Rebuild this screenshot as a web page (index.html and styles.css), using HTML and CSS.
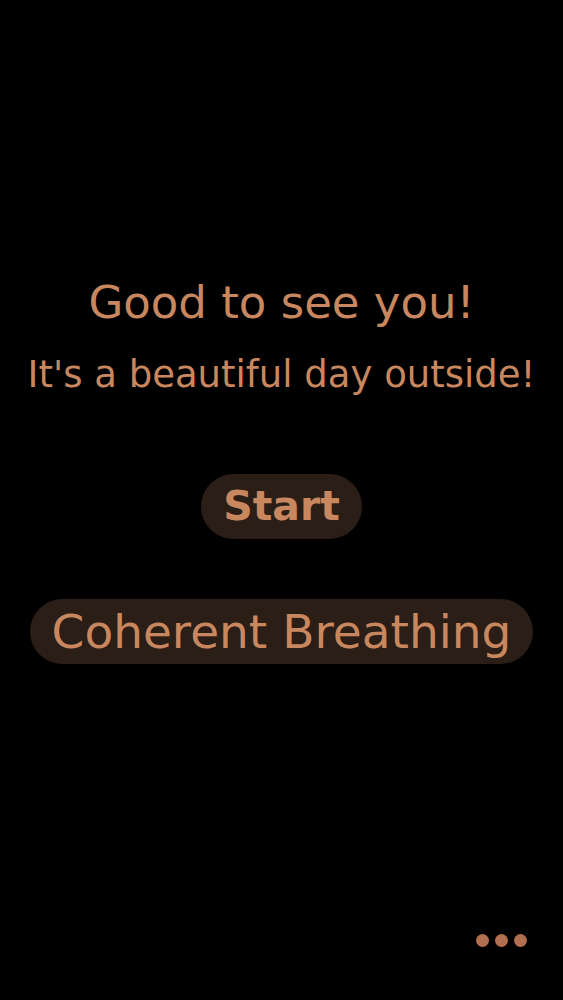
FILE: index.html
```html
<!DOCTYPE html>
<html>
<head>
<meta charset="utf-8">
<link rel="stylesheet" href="styles.css">
</head>
<body>
<main class="screen">
  <h1 class="title">Good to see you!</h1>
  <p class="subtitle">It's a beautiful day outside!</p>
  <button class="btn btn-start">Start</button>
  <button class="btn btn-mode">Coherent Breathing</button>
  <div class="more"><span></span><span></span><span></span></div>
</main>
</body>
</html>
```
FILE: styles.css
```css
html, body {
  margin: 0;
  padding: 0;
  background: #000;
}
.screen {
  position: relative;
  height: 1000px;
  display: flex;
  flex-direction: column;
  align-items: center;
  font-family: "DejaVu Sans", sans-serif;
  color: #c8875f;
}
.title {
  margin: 278px 0 0;
  font-size: 45px;
  font-weight: 400;
  line-height: 50px;
}
.subtitle {
  margin: 24px 0 0;
  font-size: 37px;
  line-height: 46px;
}
.btn {
  display: inline-flex;
  align-items: center;
  font-family: inherit;
  color: #c8875f;
  background: #2a1e16;
  border: none;
  border-radius: 33px;
  height: 65px;
  padding: 0 22px;
  line-height: 1;
}
.btn-start {
  margin-top: 76px;
  font-size: 41px;
  font-weight: 700;
}
.btn-mode {
  margin-top: 60px;
  font-size: 47px;
  font-weight: 400;
}
.more {
  position: absolute;
  right: 36px;
  bottom: 53px;
  display: flex;
  gap: 6px;
}
.more span {
  width: 13px;
  height: 13px;
  border-radius: 50%;
  background: #b06f4f;
}
```
